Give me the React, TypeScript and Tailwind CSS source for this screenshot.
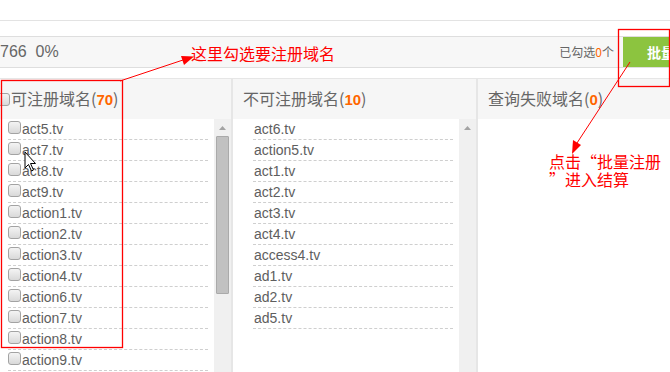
import React from "react";

const cjk = "font-['Noto_Sans_CJK_SC','Microsoft_YaHei',sans-serif]";
const lat = "font-['Liberation_Sans','Noto_Sans_CJK_SC',sans-serif]";

function Box({ className = "" }: { className?: string }) {
  return (
    <span
      className={`inline-block w-[13px] h-[13px] rounded-[3px] border border-[#a3a3a3] bg-linear-to-b from-[#f4f4f4] to-[#d9d9d9] shrink-0 ${className}`}
    />
  );
}

function UpArrow() {
  return (
    <svg width="17" height="17" viewBox="0 0 17 17" className="block">
      <path d="M5 11 L8.5 7 L12 11 Z" fill="#a3a3a3" />
    </svg>
  );
}

const col1 = [
  "act5.tv",
  "act7.tv",
  "act8.tv",
  "act9.tv",
  "action1.tv",
  "action2.tv",
  "action3.tv",
  "action4.tv",
  "action6.tv",
  "action7.tv",
  "action8.tv",
  "action9.tv",
  "action10.tv",
];
const col2 = [
  "act6.tv",
  "action5.tv",
  "act1.tv",
  "act2.tv",
  "act3.tv",
  "act4.tv",
  "access4.tv",
  "ad1.tv",
  "ad2.tv",
  "ad5.tv",
];

export default function App() {
  return (
    <div className="relative w-[670px] h-[372px] overflow-hidden bg-white flex flex-col">
      <div className="h-[20px] shrink-0" />
      <div className="h-[16px] shrink-0 border-t border-[#e3e3e3]" />
      <div className="h-[32px] shrink-0 border-y border-[#dedede] bg-[#f7f7f7] flex items-center">
        <span className={`${lat} text-[16px] text-[#666] whitespace-pre`}>766  0%</span>
        <div className="flex-1" />
        <span className={`${cjk} text-[12px] text-[#666] mr-[9px]`}>
          已勾选<span className="text-[#ff6600]">0</span>个
        </span>
        <div className="w-[47px] h-[30px] bg-[#8cc43f] overflow-hidden flex items-center pl-[24px]">
          <span className={`${cjk} text-[14px] font-bold text-white whitespace-nowrap`}>批量注册</span>
        </div>
      </div>
      <div className="h-[10px] shrink-0" />
      <div className="flex flex-1 min-h-0 border-t border-[#e6e6e6]">
        {/* column 1 */}
        <div className="w-[231px] flex flex-col shrink-0">
          <div className="h-[40px] bg-[#f6f6f6] flex items-center shrink-0">
            <Box className="-ml-[3px]" />
            <span className={`${cjk} text-[16px] text-[#666] ml-[1px]`}>
              可注册域名(<span className={`${lat} font-bold text-[15px] text-[#ff6600]`}>70</span>)
            </span>
          </div>
          <div className="flex flex-1 min-h-0">
            <div className="w-[214px] bg-white pl-[8px] pr-[6px] overflow-hidden">
              {col1.map((d) => (
                <div
                  key={d}
                  className="h-[21px] border-b border-dashed border-[#cfcfcf] flex items-center"
                >
                  <Box className="-mt-[3px]" />
                  <span className={`${lat} text-[14px] text-[#5e5e5e] ml-[1px] leading-none`}>{d}</span>
                </div>
              ))}
            </div>
            <div className="w-[17px] bg-[#f0f0f0] flex flex-col items-center">
              <div className="h-[17px]">
                <UpArrow />
              </div>
              <div className="w-[13px] h-[158px] bg-[#c1c1c1] border border-[#aaaaaa] rounded-[1px]" />
            </div>
          </div>
        </div>
        <div className="w-[2px] bg-[#e6e6e6] shrink-0" />
        {/* column 2 */}
        <div className="w-[243px] flex flex-col shrink-0">
          <div className="h-[40px] bg-[#f6f6f6] flex items-center pl-[10px] shrink-0">
            <span className={`${cjk} text-[16px] text-[#666]`}>
              不可注册域名(<span className={`${lat} font-bold text-[15px] text-[#ff6600]`}>10</span>)
            </span>
          </div>
          <div className="flex flex-1 min-h-0">
            <div className="w-[226px] bg-white pl-[20px] pr-[6px] overflow-hidden">
              {col2.map((d) => (
                <div
                  key={d}
                  className="h-[21px] border-b border-dashed border-[#cfcfcf] flex items-center"
                >
                  <span className={`${lat} text-[14px] text-[#5e5e5e] ml-[1px] leading-none`}>{d}</span>
                </div>
              ))}
            </div>
            <div className="w-[17px] bg-[#f0f0f0]">
              <UpArrow />
            </div>
          </div>
        </div>
        <div className="w-[2px] bg-[#e6e6e6] shrink-0" />
        {/* column 3 */}
        <div className="flex-1 flex flex-col">
          <div className="h-[40px] bg-[#f6f6f6] flex items-center pl-[10px] shrink-0">
            <span className={`${cjk} text-[16px] text-[#666]`}>
              查询失败域名(<span className={`${lat} font-bold text-[15px] text-[#ff6600]`}>0</span>)
            </span>
          </div>
          <div className="flex-1 bg-white" />
        </div>
      </div>

      {/* annotations overlay */}
      <svg
        className="absolute left-0 top-0 pointer-events-none"
        width="670"
        height="372"
        viewBox="0 0 670 372"
      >
        <rect x="1.5" y="80.5" width="121" height="267" fill="none" stroke="#ff0000" strokeWidth="1.3" />
        <rect x="618.5" y="29.5" width="51" height="57" fill="none" stroke="#ff0000" strokeWidth="1.3" />
        <line x1="120" y1="81" x2="183" y2="60" stroke="#ff0000" strokeWidth="1" />
        <path d="M194 56.5 L181 56 L184 65 Z" fill="#ff0000" />
        <line x1="630" y1="62" x2="577" y2="143" stroke="#ff0000" strokeWidth="1" />
        <path d="M572 154 L573 140 L581 145 Z" fill="#ff0000" />
        {/* mouse cursor */}
        <path
          d="M25 152 L25 168 L28.5 164.5 L31.5 171 L33.5 170 L30.5 163.5 L35.5 163.5 Z"
          fill="#ffffff"
          stroke="#000000"
          strokeWidth="1"
          strokeLinejoin="round"
        />
      </svg>
      <div
        className={`${cjk} absolute left-[549px] top-[152px] text-[16px] leading-[18px] text-[#ff0000] whitespace-nowrap`}
      >
        <div>点击“批量注册</div>
        <div>”进入结算</div>
      </div>
      <div
        className={`${cjk} absolute left-[191px] top-[43px] text-[16px] leading-[20px] text-[#ff0000] whitespace-nowrap`}
      >
        这里勾选要注册域名
      </div>
    </div>
  );
}
